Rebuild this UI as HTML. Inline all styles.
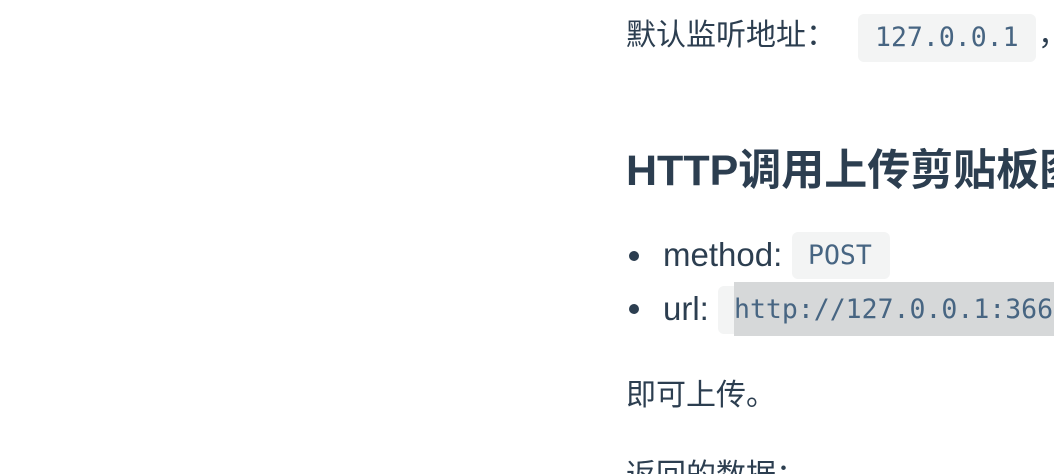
<!DOCTYPE html>
<html><head><meta charset="utf-8"><style>
html,body{margin:0;padding:0;background:#fff;width:1054px;height:474px;overflow:hidden;}
#w{position:absolute;left:0;top:0;width:1054px;height:474px;overflow:hidden;}
.t{position:absolute;white-space:nowrap;color:#2c3e50;font-family:"Liberation Sans","Noto Sans CJK SC",sans-serif;font-size:30px;line-height:1;}
.c{position:absolute;background:#f3f4f4;border-radius:6px;}
.m{position:absolute;white-space:nowrap;color:#476582;font-family:"DejaVu Sans Mono","Liberation Mono",monospace;font-size:26.5px;line-height:1;}
.dot{position:absolute;width:10px;height:10px;border-radius:50%;background:#2c3e50;}
</style></head><body><div id="w">
<div class="t" style="left:626px;top:21px;">默认监听地址：</div>
<div class="c" style="left:858px;top:14px;width:178px;height:48px;"></div>
<div class="m" style="left:875px;top:25px;">127.0.0.1</div>
<div class="t" style="left:1038px;top:21px;">，</div>

<div class="t" style="left:626px;top:150px;font-size:43px;font-weight:bold;">HTTP调用上传剪贴板图</div>

<div class="dot" style="left:629px;top:251px;"></div>
<div class="t" style="left:663px;top:238px;font-size:33px;">method:</div>
<div class="c" style="left:792px;top:232px;width:98px;height:47px;"></div>
<div class="m" style="left:808px;top:243px;">POST</div>

<div class="dot" style="left:629px;top:304px;"></div>
<div class="t" style="left:663px;top:292px;font-size:33px;">url:</div>
<div class="c" style="left:718px;top:286px;width:40px;height:48px;"></div>
<div style="position:absolute;left:734px;top:282px;width:320px;height:54px;background:#d6d8d9;"></div>
<div class="m" style="left:734px;top:297px;">http://127.0.0.1:36677/upload</div>

<div class="t" style="left:626px;top:381px;">即可上传。</div>
<div class="t" style="left:626px;top:461px;">返回的数据：</div>
</div></body></html>
